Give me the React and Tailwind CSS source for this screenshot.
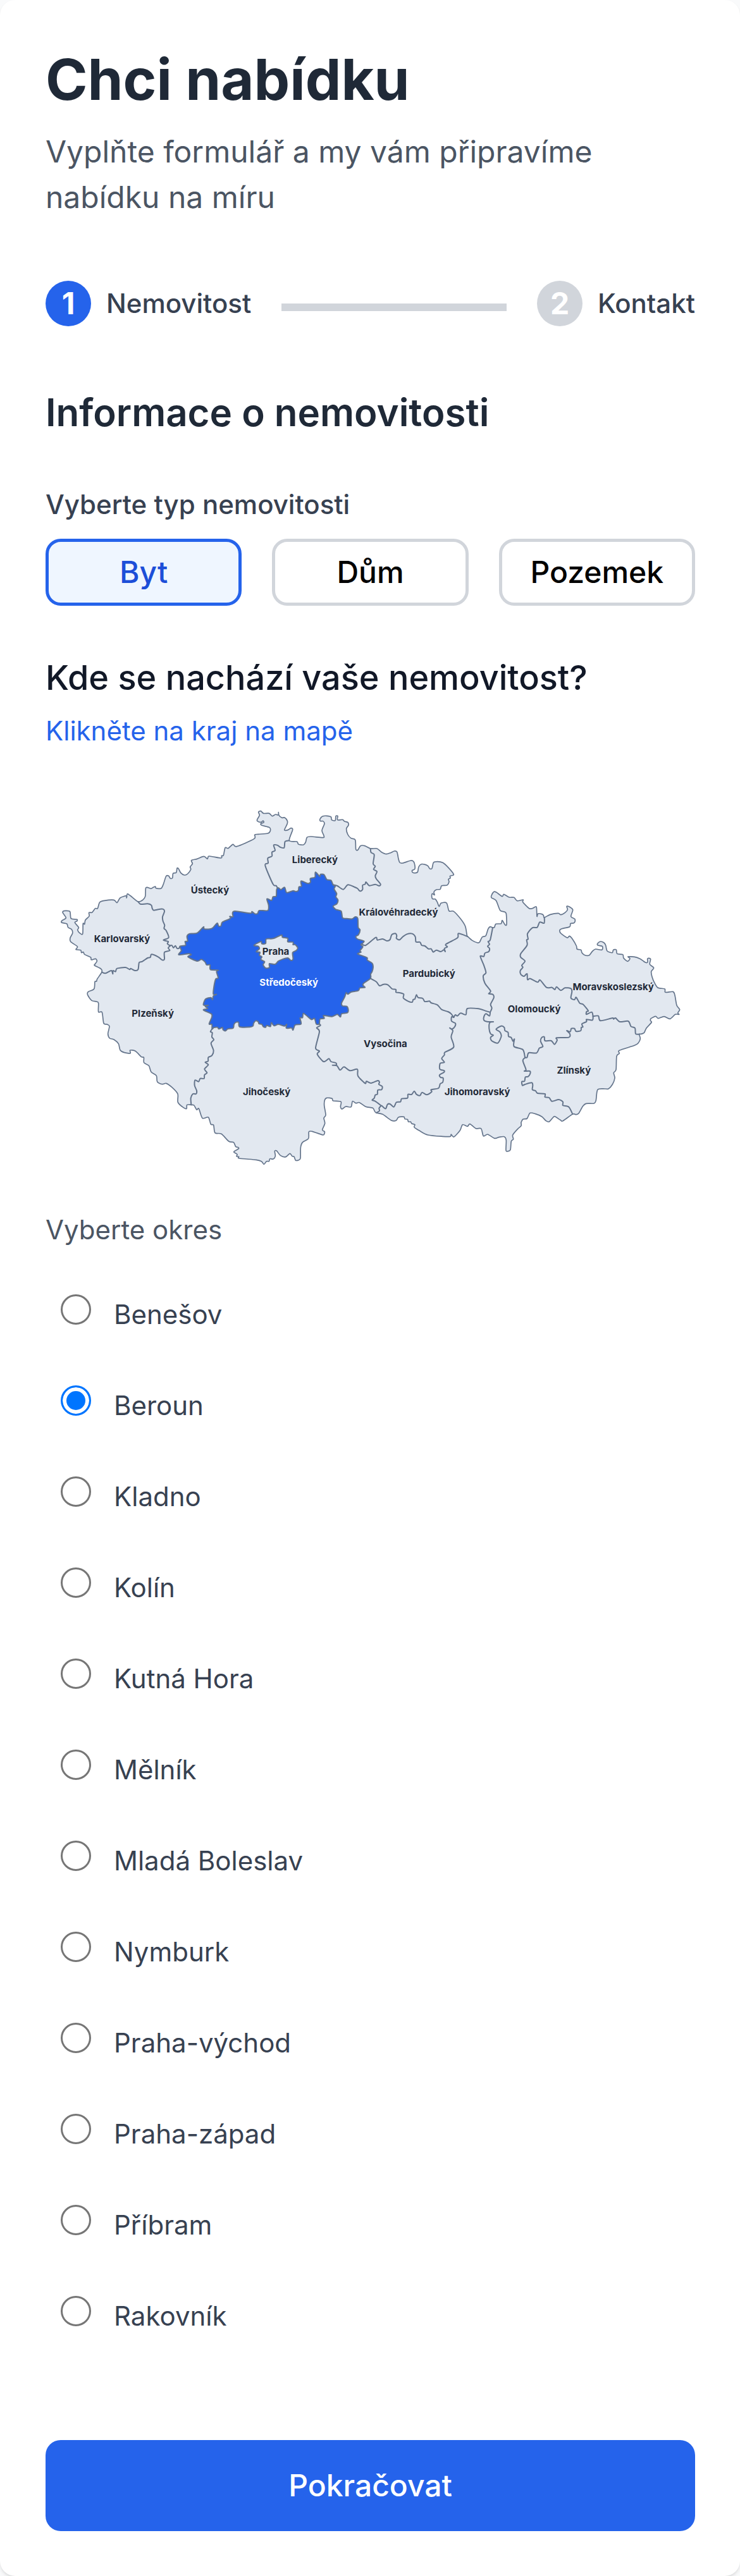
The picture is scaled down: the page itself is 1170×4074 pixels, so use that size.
import { useState } from "react";

// Shifts a list of "x,y" points by the origin of the map sheet it belongs to.
const at = (dx, dy, points) =>
  points
    .trim()
    .split(/\s+/)
    .map((p) => {
      const [x, y] = p.split(",").map(Number);
      return [x + dx, y + dy];
    });

// Turns points into a softly rounded path.
const smooth = (pts, closed) => {
  const n = pts.length;
  const get = (i) => (closed ? pts[(i + n) % n] : pts[Math.max(0, Math.min(n - 1, i))]);
  const k = 7;
  let d = `M${pts[0][0]} ${pts[0][1]}`;
  for (let i = 0; i < (closed ? n : n - 1); i++) {
    const [a, b, c, e] = [get(i - 1), get(i), get(i + 1), get(i + 2)];
    const f = (v) => Math.round(v * 10) / 10;
    d += `C${f(b[0] + (c[0] - a[0]) / k)} ${f(b[1] + (c[1] - a[1]) / k)} ${f(c[0] - (e[0] - b[0]) / k)} ${f(c[1] - (e[1] - b[1]) / k)} ${c[0]} ${c[1]}`;
  }
  return closed ? d + "Z" : d;
};

const country = smooth(
  [
    ...at(0, 0, "385,468 407,460 419,443 421,405 428,400 446,406 457,400 467,396 470,404 494,405 505,385 518,347 530,346 538,358 548,355 551,334 566,330 570,309 577,312 588,332 605,342 620,336 635,315 632,303 643,288 638,272 665,265 697,253 714,265 722,252"),
    ...at(750, 0, "28,261 31,250 40,248 48,212 62,215 85,196 103,206 185,170 188,151 205,148 250,144 262,132 258,116 222,106 217,98 231,92 228,84 218,91 201,86 200,78 211,58 206,43 217,38 230,49 257,49 271,62 287,54 300,57 301,44 303,58 317,70 330,69 343,85 342,100 329,128 345,128 360,119 368,127 352,178 388,183 396,196 420,198 430,185 436,163 455,159 512,164 516,155 507,130 519,98 512,86 500,86 498,76 510,63 530,61 550,66 553,80 570,83 573,62 582,62 581,80 605,79 614,87 630,92 633,105 623,122 630,150 645,167 665,175 668,220 678,222 690,203 710,203 737,216"),
    ...at(1500, 0, "18,216 40,233 62,242 83,236 100,228 113,232 120,265 126,282 140,285 178,273 192,278 198,298 197,314 185,320 187,329 200,332 211,327 216,303 228,290 247,292 260,299 268,311 279,310 286,283 305,278 330,283 358,308 382,339 365,346 366,356 357,362 360,374 350,390 325,392 318,409 300,411 288,422 291,436 280,430 278,445 282,455 295,456 304,470 313,491 322,475 348,474 360,512 382,514 415,550 437,585 445,628 449,634 470,652 495,663 505,660 517,636 534,630 545,598 555,587 567,591 575,590 582,574 607,572 612,557 625,577 633,576 631,525 622,516 602,509 583,463 561,449 562,437 573,421 585,424 612,443 620,433 645,447 668,448 683,464 711,459 710,470 740,500 757,499 770,492 775,497 777,538 782,525 800,527 808,533"),
    ...at(2250, 300, "62,243 90,229 128,223 140,230 160,220 172,206 168,190 180,192 197,207 188,238 206,250 207,263 200,270 186,272 182,287 145,296 135,303 140,318 170,339 181,331 195,345 214,378 217,393 236,397 240,410 255,422 275,422 290,403 305,393 335,397 337,380 316,375 314,367 328,357 345,363 353,375 360,402 384,410 389,397 403,396 407,415 434,419 438,436 457,451 468,438 459,429 490,430 515,439 543,457 552,454 551,440 557,436 566,441 562,465 581,482 569,500 573,525 583,550 600,576 633,582 636,598 672,595 681,612 690,660 704,680 695,696 701,703 683,703 658,724 630,713 602,722 590,712 568,722 565,732 570,741 546,768 535,790 520,796 512,797"),
    ...at(2250, 810, "517,308 508,328 490,340 418,364 418,378 405,391 402,455 391,470 396,495 385,525 366,546 350,546 315,550 307,600 298,615 260,616 245,628 225,662 212,668 196,666 150,698 138,694 112,677 103,682 85,702 70,698 50,678 20,665"),
    ...at(1500, 810, "744,661 730,687 711,690 702,705 702,721 686,736 662,765 665,785 655,795 651,835 640,842 630,838 631,790 622,773 598,775 576,781 543,762 523,770 512,735 487,734 459,713 447,724 424,716 412,743 383,774 370,762 366,772 330,772 260,765 220,745 195,728 198,716 183,711 178,703 167,702 163,691 150,689 146,679 120,681 108,697 85,695 45,667 15,660"),
    ...at(750, 810, "757,652 748,637 715,631 685,611 668,614 652,605 645,632 620,630 602,642 595,630 597,607 560,603 555,592 530,589 520,600 518,625 525,670 516,685 521,710 509,740 520,750 516,764 505,763 460,748 445,750 443,782 415,800 406,825 405,875 396,884 382,885 375,868 366,866 355,853 335,869 310,862 292,840 283,842 286,865 276,879 260,878 256,890 244,890 232,904 220,890 195,883 115,876 113,868 102,866 105,857 89,846 97,839 112,830 110,824 98,820 88,800 65,795 30,760"),
    ...at(0, 810, "750,755 743,718 730,714 718,681 690,685 673,640 663,645 650,624 637,622 617,622 615,640 600,635 574,610 573,570 545,538 518,520 500,524 476,512 472,484 447,466 436,436 413,422 412,397 400,394 372,367 347,363 348,377 320,374 300,362 292,332 270,312 250,306 242,285 249,249 238,240 222,235 214,183 197,181 197,140 188,132 165,127 146,101 148,86 176,72 180,38 188,36 191,25 213,-8"),
    ...at(0, 0, "209,787 179,771 180,765 190,750 183,739 163,744 160,732 132,719 125,707 116,710 113,698 90,695 97,681 65,658 63,640 74,618 70,600 53,590 47,573 22,567 25,557 43,545 28,521 30,513 42,511 62,515 67,548 95,552 95,560 85,567 103,590 98,602 108,617 122,621 124,572 131,575 135,555 153,537 152,520 167,519 182,500 193,500 203,471 225,463 270,460 285,473 300,450 330,440 330,450 334,431 350,441"),
  ],
  true
);

const borders = [
  at(0, 0, "385,468 397,480 430,478 448,485 452,500 460,509 490,503 505,504 510,515 501,540 503,560 511,580 508,595 518,605 530,638 505,650 528,657 524,668 537,677"),
  at(0, 0, "537,677 545,675 553,687 562,677 570,690 580,688 583,680"),
  at(0, 0, "537,677 528,688 535,700 510,708 510,740 500,745 480,730 449,718 443,732 430,735 405,752 390,757 385,790 370,795 350,785 345,790 325,780 285,785 278,800 266,795 265,811 258,795 230,808 213,802"),
  at(750, 0, "352,178 332,183 328,212 310,210 295,200 278,200 285,225 270,233 270,252 250,262 252,285 238,297 275,385 290,392 297,405"),
  at(750, 0, "737,216 740,235 755,245 750,288 760,300 752,315 768,325 760,345 765,360 785,385 778,393 760,386 732,392 716,375 712,385 700,390 700,410 688,418 675,405 660,398 630,388 608,410 580,393 560,388"),
  at(1500, 0, "-55,668 -35,675 12,638 20,650 45,645 65,654 80,648 88,625 105,619 112,630 110,642 125,649 140,635 160,622 185,620 200,635 203,659 222,660 230,675 245,678 262,692 275,692 285,707 300,698 320,705 335,697 342,705 338,690 352,682 345,670 400,640 405,619 449,634"),
  at(1500, 810, "-13,22 15,38 30,57 50,50 70,53 90,72 108,75 108,88 125,90 145,97 143,115 165,130 185,135 190,122 198,120 205,100 213,113 235,117 245,132 267,130 275,138 305,148 325,170 355,180 370,190 382,207"),
  at(1500, 810, "382,207 390,195 400,200 415,187 440,194 447,165 500,166 530,175 555,183"),
  at(1500, 0, "567,591 555,650 545,657 552,670 543,680 552,690 548,705 530,712 525,728 508,727 525,770 535,805 522,820 530,855 557,892 548,905 568,908 572,925 557,955 563,973 555,993"),
  at(1500, 810, "555,183 552,200 535,190 525,205 525,220 540,227 570,228 553,232 550,260 557,285 570,292 557,302 562,318 590,329 603,310 608,293 600,275 583,263 607,248 622,255 625,270 640,278 642,297 655,303 663,320 670,310 668,345 710,360 720,397"),
  at(1500, 810, "382,207 372,205 372,225 390,235 388,250 375,262 363,257 378,270 370,300 382,348 340,373 338,385 325,402 338,420 318,425 316,452 337,460 335,468 315,480 320,492 332,495 330,515 318,522 310,543 275,550 278,560 255,574 232,563 222,578 205,572 195,557 182,573 165,572 163,590 135,593 130,607 110,610 98,632 80,618 68,620 60,640 50,635 40,626 28,638 30,650 15,660"),
  at(750, 810, "494,238 500,245 482,257 495,275 477,352 495,367 485,382 515,417 540,403 550,417 573,423 575,433 557,434 578,436 593,457 612,442 640,460 675,453 678,485 712,520 718,510 740,519 772,507 780,515 777,525 793,535 790,550 772,552 770,572 760,575 755,590 745,600 760,605 788,626"),
  at(0, 810, "736,262 728,275 737,280 735,300 744,313 731,330 743,365 735,388 718,397 717,415 703,420 718,432 700,452 712,470 700,480 698,497 680,497 672,512 655,505 653,530 663,555 660,570 645,570 635,590 637,622"),
  at(2250, 300, "62,243 61,270 40,265 28,290 5,292 -18,320 -15,345 -22,350 -20,375 -50,415 -50,432 -30,450 -45,470 -40,480 -52,495 -50,512 -35,522 -20,510 -18,538 -5,533 30,550 42,540 72,575 98,575 112,585 120,572 140,589 160,577 188,580 193,595 188,625 205,633 213,622 230,650 245,655 270,685 262,690 262,703 287,692 293,712"),
  at(2250, 300, "293,712 290,730 262,727 262,737 240,748 245,762 237,765 235,780 212,783 205,770 190,770 185,785 168,780 183,795 178,812 120,814 123,825 110,845 95,828 65,828 62,810 50,812 44,830 55,855 38,863 25,886 -12,885 -20,907 -30,907"),
  at(2250, 300, "293,712 318,710 328,733 385,720 390,725 400,720 420,738 460,735 473,760 492,768 495,795 512,797"),
  at(2250, 810, "-28,397 -40,412 -25,455 -33,462 -7,462 -5,473 -15,488 -28,490 -32,510 -45,512 -42,530 -30,525 2,517 7,530 5,550 20,555 30,567 65,570 65,585 85,588 98,605 130,597 150,608 150,625 178,632 196,666"),
].map((pts) => smooth(pts, false));

const stredocesky = smooth(
  [
    ...at(0, 0, "578,720 590,700 584,680 610,675 608,657 620,655 617,632 630,620 665,617 695,588 698,597 725,598 740,592 760,570"),
    ...at(750, 0, "17,584 28,583 35,565 72,548 70,538 85,540 83,522 95,513 168,523 175,515 190,526 202,524 210,510 250,510 254,485 246,455 268,462 275,445 290,442 292,412 300,402 312,411 330,400 340,425 370,416 382,420 395,415 398,398 410,395 408,370 440,382 453,375 452,358 474,352 476,328 497,348 500,338 517,340 530,363 550,367 560,388 570,395 565,408 577,430 573,445 583,460 578,478 560,489 573,505 598,513 605,545 625,548 650,550 665,540 677,548 679,590 688,602 680,625 668,633 675,645 707,656 692,672 701,682 688,700 692,708 677,716 720,733 722,745 745,760 750,778 745,800 738,812 737,832"),
    ...at(750, 810, "705,45 702,55 711,65 687,67 680,80 645,87 630,97 622,90 615,110 600,140 605,153 625,155 632,172 628,185 600,190 595,205 580,193 555,203 515,198 518,212 498,215 494,238 480,238 472,212 457,217 430,195 418,188 415,208 403,210 408,238 380,243 370,267 363,257 338,258 340,240 330,248 300,240 280,247 267,232 263,250 245,245 240,254 228,250 222,240 208,237 205,228 193,223 183,235 180,248 165,253 117,252 112,231 100,230 90,240 86,258 60,262 50,271 38,266 35,255 18,262 12,254"),
    ...at(0, 810, "745,255 736,262 735,240 722,238 735,205 732,190 695,172 715,165 703,155 718,150 695,148 705,120 730,113 738,123 742,105 757,98 742,97 745,60 753,25 765,20 757,-10 765,-17 728,-20 726,-42 710,-42 703,-55 685,-68 665,-60 622,-80 637,-90 625,-95"),
  ],
  true
);

const praha = smooth(
  at(750, 0, "185,675 218,657 222,668 240,666 243,645 275,643 315,626 320,637 345,642 345,658 370,660 370,672 380,672 392,687 385,700 368,710 370,740 360,747 345,735 318,742 300,750 285,765 258,762 258,780 240,783 228,767 235,753 217,742 222,730 210,722 213,708 195,705 210,692 205,680"),
  true
);

const regionNames = [
  ["Karlovarský", 309, 660],
  ["Ústecký", 726, 430],
  ["Liberecký", 1224, 286],
  ["Praha", 1038, 720],
  ["Královéhradecký", 1620, 535],
  ["Pardubický", 1765, 825],
  ["Moravskoslezský", 2639, 888],
  ["Olomoucký", 2264, 992],
  ["Plzeňský", 455, 1015],
  ["Jihočeský", 995, 1387],
  ["Vysočina", 1558, 1158],
  ["Jihomoravský", 1994, 1387],
  ["Zlínský", 2452, 1285],
];

const districts = [
  "Benešov",
  "Beroun",
  "Kladno",
  "Kolín",
  "Kutná Hora",
  "Mělník",
  "Mladá Boleslav",
  "Nymburk",
  "Praha-východ",
  "Praha-západ",
  "Příbram",
  "Rakovník",
];

function RegionMap() {
  return (
    <svg viewBox="-54 -252 3081 2043" className="block h-auto w-full" role="img" aria-label="Mapa krajů">
      <g stroke="#64748b" strokeLinejoin="round" strokeLinecap="round">
        <path d={country} fill="#e2e8f0" strokeWidth="5" />
        {borders.map((d) => (
          <path key={d} d={d} fill="none" strokeWidth="6" />
        ))}
        <path d={stredocesky} fill="#2563eb" strokeWidth="6" />
        <path d={praha} fill="#e2e8f0" strokeWidth="6" />
      </g>
      <g textAnchor="middle" className="fill-gray-800 text-[45px] font-bold">
        {regionNames.map(([name, x, y]) => (
          <text key={name} x={x} y={y}>
            {name}
          </text>
        ))}
        <text x="1100" y="867" className="fill-white">
          Středočeský
        </text>
      </g>
    </svg>
  );
}

function Step({ number, label, active }) {
  return (
    <div className="flex items-center gap-6">
      <span
        className={`flex size-18 items-center justify-center rounded-full text-[48px] leading-none font-bold text-white ${
          active ? "bg-blue-600" : "bg-gray-300"
        }`}
      >
        {number}
      </span>
      <span className="text-[42px] leading-[60px] font-medium text-gray-700">{label}</span>
    </div>
  );
}

export default function App() {
  const [type, setType] = useState("Byt");
  const [district, setDistrict] = useState("Beroun");

  return (
    <div className="bg-gray-50 font-['Inter',sans-serif] [--color-blue-50:#eff6ff] [--color-blue-600:#2563eb] [--color-blue-700:#1d4ed8] [--color-gray-50:#f9fafb] [--color-gray-300:#d1d5db] [--color-gray-600:#4b5563] [--color-gray-700:#374151] [--color-gray-800:#1f2937] [--color-gray-900:#111827]">
      <main className="rounded-3xl bg-white pt-18 pr-[71px] pb-[71px] pl-18 shadow-md">
        <h1 className="text-[90px] leading-[108px] font-bold text-gray-800">Chci nabídku</h1>
        <p className="mt-6 text-[48px] leading-[72px] text-gray-600">
          Vyplňte formulář a my vám připravíme nabídku na míru
        </p>

        <div className="mt-24 flex items-center">
          <Step number="1" label="Nemovitost" active />
          <div className="mx-12 mt-3 h-3 flex-1 bg-gray-300" />
          <Step number="2" label="Kontakt" />
        </div>

        <form onSubmit={(e) => e.preventDefault()}>
          <h2 className="mt-24 text-[60px] leading-[80px] font-semibold text-gray-800">
            Informace o nemovitosti
          </h2>

          <p id="typ" className="mt-19 text-[42px] leading-[60px] font-medium text-gray-700">
            Vyberte typ nemovitosti
          </p>
          <div role="group" aria-labelledby="typ" className="mt-6 grid grid-cols-3 gap-12">
            {["Byt", "Dům", "Pozemek"].map((name) => (
              <button
                key={name}
                type="button"
                aria-pressed={type === name}
                onClick={() => setType(name)}
                className={`rounded-3xl border-[5px] py-3 text-[48px] leading-[72px] font-medium ${
                  type === name ? "border-blue-600 bg-blue-50 text-blue-700" : "border-gray-300 text-black"
                }`}
              >
                {name}
              </button>
            ))}
          </div>

          <h3 className="mt-18 text-[54px] leading-[84px] font-medium text-gray-900">
            Kde se nachází vaše nemovitost?
          </h3>
          <p className="mt-3 text-[42px] leading-[60px] text-blue-600">Klikněte na kraj na mapě</p>

          <RegionMap />

          <fieldset className="mt-12">
            <legend className="text-[42px] leading-[60px] text-gray-600">Vyberte okres</legend>
            <div className="mt-12 flex flex-col gap-[33px]">
              {districts.map((name) => (
                <label key={name} className="flex items-start gap-9 p-6">
                  <input
                    type="radio"
                    name="okres"
                    value={name}
                    checked={district === name}
                    onChange={() => setDistrict(name)}
                    className="size-12 shrink-0 appearance-none rounded-full border-3 border-[#767676] bg-white checked:border-[#0075ff] checked:bg-[#0075ff] checked:shadow-[inset_0_0_0_6px_white]"
                  />
                  <span className="text-[42px] leading-[63px] text-gray-700">{name}</span>
                </label>
              ))}
            </div>
          </fieldset>

          <button
            type="submit"
            className="mt-[141px] w-full rounded-3xl bg-blue-600 py-9 text-[48px] leading-[72px] font-medium text-white"
          >
            Pokračovat
          </button>
        </form>
      </main>
    </div>
  );
}
